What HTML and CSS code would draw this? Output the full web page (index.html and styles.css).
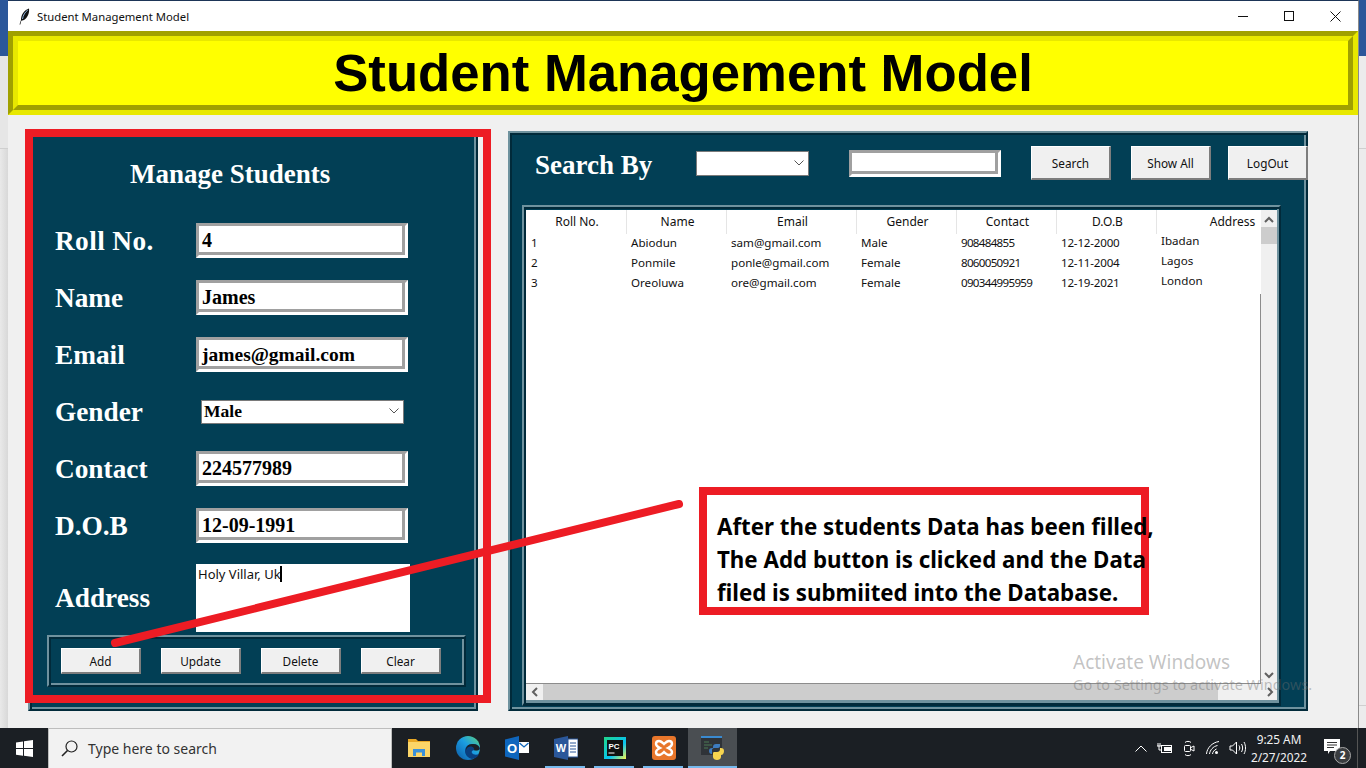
FILE: index.html
```html
<!DOCTYPE html>
<html lang="en">
<head>
<meta charset="utf-8">
<title>Student Management Model</title>
<link rel="stylesheet" href="styles.css">
</head>
<body>
<div class="screen">
  <div class="desk">
    <div class="side side-left"><div class="side-blue"></div><div class="side-band"></div><div class="side-rest"></div></div>
    <div class="window">
      <div class="titlebar">
        <svg class="feather" width="12" height="17" viewBox="0 0 12 17"><path d="M1.500 16.500 3 12C3 7 6 2 11 .5c.6 4-1 9-5 11.500l-2.700.8-1 3.700z" fill="#111"/><path d="M4.500 11C5 7.500 7 4 9.800 2" stroke="#8fb4dc" stroke-width="1" fill="none"/></svg>
        <span class="title-text">Student Management Model</span>
        <div class="win-controls">
          <span class="win-btn"><svg width="10" height="10" viewBox="0 0 10 10"><path d="M0 5.500h10" stroke="#111" fill="none"/></svg></span>
          <span class="win-btn"><svg width="10" height="10" viewBox="0 0 10 10"><rect x=".5" y=".5" width="9" height="9" stroke="#111" fill="none"/></svg></span>
          <span class="win-btn"><svg width="11" height="11" viewBox="0 0 11 11"><path d="M.5.500l10 10M10.500.500l-10 10" stroke="#111" fill="none"/></svg></span>
        </div>
      </div>
      <header class="banner"><h1 class="banner-inner">Student Management Model</h1></header>
      <div class="content">
        <section class="frame manage">
          <h2 class="manage-title">Manage Students</h2>
          <div class="row"><span class="label label-roll">Roll No.</span><div class="entry">4</div></div>
          <div class="row"><span class="label">Name</span><div class="entry">James</div></div>
          <div class="row"><span class="label">Email</span><div class="entry entry-email">james@gmail.com</div></div>
          <div class="row"><span class="label">Gender</span><div class="combo combo-gender"><span>Male</span><svg class="chev" width="10" height="6" viewBox="0 0 10 6"><path d="M.5.500 5 5 9.500.500" stroke="#555" fill="none"/></svg></div></div>
          <div class="row"><span class="label">Contact</span><div class="entry">224577989</div></div>
          <div class="row"><span class="label">D.O.B</span><div class="entry">12-09-1991</div></div>
          <div class="row row-address"><span class="label">Address</span><div class="textarea"><span>Holy Villar, Uk</span><i class="caret"></i></div></div>
          <div class="btn-frame">
            <button class="btn">Add</button>
            <button class="btn">Update</button>
            <button class="btn">Delete</button>
            <button class="btn">Clear</button>
          </div>
        </section>
        <section class="frame results">
          <div class="searchbar">
            <span class="label search-label">Search By</span>
            <div class="combo combo-search"><svg class="chev" width="10" height="6" viewBox="0 0 10 6"><path d="M.5.500 5 5 9.500.500" stroke="#555" fill="none"/></svg></div>
            <div class="entry entry-search"></div>
            <button class="btn btn-tall btn-search">Search</button>
            <button class="btn btn-tall btn-showall">Show All</button>
            <button class="btn btn-tall btn-logout">LogOut</button>
          </div>
          <div class="tree-frame">
            <div class="tree">
              <div class="tr th"><span>Roll No.</span><span>Name</span><span>Email</span><span>Gender</span><span>Contact</span><span>D.O.B</span><span>Address</span></div>
              <div class="tr"><span>1</span><span>Abiodun</span><span>sam@gmail.com</span><span>Male</span><span class="phone">908484855</span><span class="date">12-12-2000</span><span class="addr">Ibadan</span></div>
              <div class="tr"><span>2</span><span>Ponmile</span><span>ponle@gmail.com</span><span>Female</span><span class="phone">8060050921</span><span class="date">12-11-2004</span><span class="addr">Lagos</span></div>
              <div class="tr"><span>3</span><span>Oreoluwa</span><span>ore@gmail.com</span><span>Female</span><span class="phone">090344995959</span><span class="date">12-19-2021</span><span class="addr">London</span></div>
              <div class="tree-rest"></div>
            </div>
            <div class="vscroll">
              <svg class="sb-arrow" width="10" height="7" viewBox="0 0 10 7"><path d="M1 6 5 2l4 4" stroke="#606060" stroke-width="2" fill="none"/></svg>
              <div class="vthumb"></div>
              <svg class="sb-arrow sb-down" width="10" height="7" viewBox="0 0 10 7"><path d="M1 1l4 4 4-4" stroke="#606060" stroke-width="2" fill="none"/></svg>
            </div>
            <div class="hscroll">
              <svg class="sb-h" width="7" height="10" viewBox="0 0 7 10"><path d="M6 1 2 5l4 4" stroke="#606060" stroke-width="2" fill="none"/></svg>
              <div class="hthumb"></div>
              <svg class="sb-h" width="7" height="10" viewBox="0 0 7 10"><path d="M1 1l4 4-4 4" stroke="#606060" stroke-width="2" fill="none"/></svg>
            </div>
          </div>
        </section>
      </div>
    </div>
    <div class="side side-right"><div class="side-blue"></div><div class="side-band"></div><div class="side-rest2"></div></div>
  </div>

  <footer class="taskbar">
    <div class="start"><svg width="17" height="17" viewBox="0 0 17 17"><path d="M0 2.400 7 1.400v6.700H0zM8 1.300 17 0v8.100H8zM0 9.100h7v6.600L0 14.700zM8 9.100h9V17l-9-1.200z" fill="#fff"/></svg></div>
    <div class="search"><svg width="17" height="17" viewBox="0 0 17 17"><circle cx="10.500" cy="6.500" r="5.500" stroke="#222" stroke-width="1.200" fill="none"/><path d="M6.500 10.500 1 16" stroke="#222" stroke-width="1.600" fill="none"/></svg><span>Type here to search</span></div>
    <div class="apps">
      <div class="app"><svg width="22" height="20" viewBox="0 0 22 20"><path d="M0 1h8l2 2h12v15H0z" fill="#e9a825"/><path d="M0 4h22v15H0z" fill="#fbd568"/><path d="M5 18v-7h12v7h-3v-3.500H8V18z" fill="#3a90d8"/></svg></div>
      <div class="app"><svg width="24" height="24" viewBox="0 0 24 24"><defs><linearGradient id="edge" x1="0" y1="1" x2="1" y2="0"><stop offset="0" stop-color="#0c59a4"/><stop offset=".55" stop-color="#1b9de2"/><stop offset="1" stop-color="#5ed47b"/></linearGradient></defs><circle cx="12" cy="12" r="12" fill="url(#edge)"/><path d="M24 13c0-3-3-5-7-5-5 0-8 3-8 7 0 4 3 7 7 8 5-1 6-3 7-5-2 1-6 1-7-1s1-3 3-3 4 1 5-1z" fill="#0a3f7e"/><path d="M23.500 12.500c-.5 2-3 2.500-5.500 1.800 1-1.500-1-4.300-4-3.800-2.500.4-3.500 2-3.800 3.500C9.500 10.500 13 7.500 17 8c4 .3 6.500 2.500 6.500 4.500z" fill="#1c2025"/></svg></div>
      <div class="app"><svg width="24" height="24" viewBox="0 0 24 24"><path d="M0 3.500 14 0v24L0 20.500z" fill="#0f66bd"/><rect x="14" y="6" width="10" height="11" fill="#fff"/><path d="M14.500 7 19 11l4.500-4" stroke="#0f66bd" stroke-width="1.300" fill="none"/><text x="7" y="16.500" class="svg-o">O</text></svg></div>
      <div class="app"><svg width="24" height="24" viewBox="0 0 24 24"><path d="M0 3 14 0v24L0 21z" fill="#2b579a"/><rect x="14" y="3" width="10" height="18" fill="#fff" stroke="#2b579a"/><path d="M16 7h6M16 10h6M16 13h6M16 16h6" stroke="#2b579a"/><text x="7" y="16" class="svg-w">W</text></svg></div>
      <div class="app"><svg width="22" height="22" viewBox="0 0 22 22"><defs><linearGradient id="pc" x1="0" y1="0" x2="1" y2="1"><stop offset="0" stop-color="#21d789"/><stop offset=".6" stop-color="#07c3f2"/><stop offset="1" stop-color="#fcf84a"/></linearGradient></defs><rect width="22" height="22" fill="url(#pc)"/><rect x="3" y="3" width="16" height="16" fill="#111"/><text x="4.500" y="11.500" class="svg-pc">PC</text><path d="M4.500 16h6" stroke="#fff"/></svg></div>
      <div class="app"><svg width="24" height="24" viewBox="0 0 24 24"><rect width="24" height="24" rx="3" fill="#e8762b"/><path d="M7 5c2 0 3 1 5 3 2-2 3-3 5-3 2 0 3 1 3 3 0 2-2 3-4 4 2 1 4 2 4 4 0 2-1 3-3 3s-3-1-5-3c-2 2-3 3-5 3s-3-1-3-3c0-2 2-3 4-4-2-1-4-2-4-4 0-2 1-3 3-3z" fill="none" stroke="#fff" stroke-width="2.400"/></svg></div>
      <div class="app app-active"><svg width="23" height="24" viewBox="0 0 23 24"><rect y="1" width="21" height="18" fill="#2f3338"/><rect y="0" width="21" height="2" fill="#3a8ad0"/><path d="M3 6h5M3 9h8M3 12h4" stroke="#4d7a55"/><path d="M11 21v-7c0-1 1-2 2-2h4c1 0 2-1 2-2V8h-4c-2 0-3 1-3 3v1h-1c-2 0-3 1-3 3s1 3 3 3z" fill="#3d7cc0"/><path d="M23 15c0-2-1-3-3-3h-1v1c0 2-1 3-3 3h-3c-1 0-1 1-1 2v3c0 2 2 3 4 3s4-1 4-3v-2c2 0 3-2 3-4z" fill="#f6d44f"/></svg></div>
    </div>
    <div class="tray">
      <span class="tray-item"><svg width="12" height="7" viewBox="0 0 12 7"><path d="M.5 6.500 6 1l5.500 5.500" stroke="#fff" fill="none"/></svg></span>
      <span class="tray-item"><svg width="16" height="11" viewBox="0 0 16 11"><rect x="4.500" y="2.500" width="10" height="7" stroke="#fff" fill="none"/><rect x="7" y="4" width="7" height="4" fill="#fff"/><path d="M0 3h4M1 0v3M3 0v3M2 3v4h3" stroke="#fff" fill="none"/></svg></span>
      <span class="tray-item"><svg width="12" height="17" viewBox="0 0 12 17"><rect x="1.500" y="5.500" width="6" height="6" rx="1" stroke="#fff" fill="none"/><path d="M8 7.500 11 6v5l-3-1.500M2 2.500C3 1 7 1 8 2.500M2 14.500c1 1.500 5 1.500 6 0" stroke="#fff" fill="none"/></svg></span>
      <span class="tray-item"><svg width="14" height="14" viewBox="0 0 14 14"><path d="M.5 13C1 7 6 1.500 13 .500M3.500 13c.5-4 3.500-7.500 8-8.500M6.500 13c.3-2 1.500-4 4-5" stroke="#fff" fill="none"/><circle cx="10.500" cy="11.500" r="1.500" fill="#fff"/></svg></span>
      <span class="tray-item"><svg width="17" height="14" viewBox="0 0 17 14"><path d="M1 5h2.500L7.500 1v12l-4-4H1zM10 4.500c1 1.500 1 3.500 0 5M12.500 3c1.500 2.500 1.500 5.500 0 8M15 1c2 3.500 2 8.500 0 12" stroke="#fff" fill="none"/></svg></span>
    </div>
    <div class="clock"><span>9:25 AM</span><span>2/27/2022</span></div>
    <div class="notify">
      <svg width="17" height="16" viewBox="0 0 17 16"><path d="M0 0h16v12H6l-2 3v-3H0z" fill="#fff"/><path d="M3 3.500h10M3 6h10M3 8.500h7" stroke="#333"/></svg>
      <span class="badge">2</span>
    </div>
    <div class="show-desktop"></div>
  </footer>

  <div class="mark mark-left"></div>
  <svg class="pointer" width="1366" height="768" viewBox="0 0 1366 768"><line x1="115" y1="643" x2="679" y2="504" stroke="#ed1c24" stroke-width="8" stroke-linecap="round"/></svg>
  <div class="note"><p>After the students Data has been filled,</p><p>The Add button is clicked and the Data</p><p>filed is submiited into the Database.</p></div>
  <div class="watermark"><span class="wm-1">Activate Windows</span><span class="wm-2">Go to Settings to activate Windows.</span></div>
</div>
</body>
</html>
```

FILE: styles.css
```css
* { box-sizing: border-box; }
html, body { margin: 0; padding: 0; }
body {
  width: 1366px;
  height: 768px;
  overflow: hidden;
  font-family: "Noto Sans", "Open Sans", sans-serif;
  font-size: 12px;
  color: #111;
  background: #f0f0f0;
}
.screen {
  position: relative;
  width: 1366px;
  height: 768px;
  display: flex;
  flex-direction: column;
}
.desk { height: 728px; display: flex; }
.side { flex: 1 1 0; display: flex; flex-direction: column; background: #ececec; }
.side-left { flex: 0 0 8px; background: #e6e6e6; }
.side-right { flex: 0 0 7px; }
.side-blue { height: 56px; background: #2b579a; }
.side-band { height: 93px; border-bottom: 1px solid #cfcfcf; }
.side-rest { flex: 1; background: linear-gradient(90deg, #e9e9e9, #d8d8d8); }
.side-rest2 { height: 557px; border-bottom: 1px solid #cfcfcf; }

.window {
  flex: 0 0 1351px;
  display: flex;
  flex-direction: column;
  background: #f0f0f0;
  border-top: 1px solid #1d3557;
  border-right: 1px solid #8a8a8a;
}
.titlebar {
  height: 30px;
  flex: none;
  display: flex;
  align-items: center;
  padding-left: 10px;
  background: #fff;
}
.feather { flex: none; }
.title-text { margin-left: 7px; font-size: 11.300px; color: #111; }
.win-controls { margin-left: auto; display: flex; }
.win-btn { width: 46px; height: 30px; display: flex; align-items: center; justify-content: center; }

.banner {
  height: 84px;
  flex: none;
  border: 5px solid;
  border-color: #a0a000 #e8e800 #e8e800 #a0a000;
}
.banner-inner {
  height: 100%;
  margin: 0;
  border: 5px solid;
  border-color: #e8e800 #a0a000 #a0a000 #e8e800;
  background: #ff0;
  color: #000;
  font: 700 52.700px/64px "Liberation Sans", Arial, sans-serif;
  text-align: center;
}

.content { display: flex; align-items: flex-start; padding: 15px 0 0 20px; gap: 30px; }
.frame {
  flex: none;
  border: 2px solid;
  border-color: #6f929e #012a3a #012a3a #6f929e;
  background: #023f55;
  box-shadow: inset 2px 2px 0 #012a3a, inset -2px -2px 0 #6f929e;
}
.manage { width: 450px; height: 581px; padding-top: 2px; }
.results { width: 800px; height: 580px; margin-top: 1px; }

.label {
  color: #fff;
  font: 700 27.300px/32px "Liberation Serif", "Times New Roman", serif;
  white-space: nowrap;
}
.label-roll { letter-spacing: .4px; }
.manage-title {
  margin: 0 0 9px 100px;
  height: 80px;
  color: #fff;
  font: 700 27px/80px "Liberation Serif", "Times New Roman", serif;
}
.row { display: flex; align-items: center; height: 35px; margin: 0 0 22px 25px; }
.row .label { flex: 0 0 141px; }
.row-address { height: 68px; margin: -1px 0 3px 25px; }

.entry {
  width: 212px;
  height: 35px;
  border: 3px solid;
  border-color: #a0a0a0 #fff #fff #a0a0a0;
  box-shadow: inset -3px -3px 0 #a0a0a0;
  background: #fff;
  padding-left: 3px;
  color: #000;
  font: 700 20px/29px "Liberation Serif", "Times New Roman", serif;
}
.entry-email { font-size: 19.500px; }
.combo {
  display: flex;
  align-items: center;
  background: #fff;
  border: 1px solid #7a7a7a;
  color: #000;
  font: 700 17.500px/20px "Liberation Serif", "Times New Roman", serif;
  padding: 0 0 1px 2px;
}
.chev { margin-left: auto; margin-right: 4px; flex: none; }
.combo-gender { width: 203px; height: 24px; margin-left: 5px; }
.combo-search { width: 113px; height: 25px; flex: none; }

.textarea {
  display: flex;
  align-items: flex-start;
  width: 214px;
  height: 68px;
  padding: 2px 0 0 2px;
  background: #fff;
  color: #111;
  font-size: 13px;
  line-height: 16px;
}
.caret { width: 2px; height: 16px; background: #000; margin-left: -1px; }

.btn-frame {
  display: flex;
  align-items: center;
  gap: 20px;
  width: 419px;
  height: 52px;
  margin-left: 17px;
  padding-left: 12px;
  border: 2px solid;
  border-color: #6f929e #012a3a #012a3a #6f929e;
  box-shadow: inset 2px 2px 0 #012a3a, inset -2px -2px 0 #6f929e;
}
.btn {
  flex: none;
  width: 80px;
  height: 26px;
  padding: 0;
  border-style: solid;
  border-width: 1px 2px 2px 1px;
  border-color: #fff #7d7d7d #7d7d7d #fff;
  background: #f0f0f0;
  color: #111;
  font: 11.800px "Noto Sans", "Open Sans", sans-serif;
}
.btn-tall { height: 34px; }

.searchbar { display: flex; align-items: center; height: 34px; margin-top: 13px; padding-left: 25px; }
.search-label { flex: 0 0 161px; padding-top: 4px; font-size: 27px; }
.entry-search { width: 152px; height: 27px; margin-left: 40px; flex: none; }
.btn-search { margin-left: 30px; }
.btn-showall { margin-left: 20px; }
.btn-logout { margin-left: 17px; }

.tree-frame {
  display: grid;
  grid-template-columns: 735px 16px;
  grid-template-rows: 474px 16px;
  width: 759px;
  height: 501px;
  margin: 25px 0 0 12px;
  padding: 3px 2px 0;
  border: 2px solid;
  border-bottom-width: 3px;
  border-color: #6f929e #012a3a #012a3a #6f929e;
  box-shadow: inset 2px 2px 0 #012a3a, inset -2px -3px 0 #6f929e;
}
.tree {
  display: flex;
  flex-direction: column;
  overflow: hidden;
  background: #fff;
  border-bottom: 1px solid #8c8c8c;
}
.tr {
  display: grid;
  grid-template-columns: 100px 100px 130px 100px 100px 100px 150px;
  height: 20px;
  flex: none;
  color: #111;
  font-size: 11.600px;
  line-height: 18px;
  white-space: nowrap;
}
.tr span { padding-left: 5px; }
.tr .addr { line-height: 14px; }
.tr .phone { letter-spacing: -.7px; }
.tr .date { letter-spacing: -.2px; }
.th { height: 24px; line-height: 23px; font-size: 12px; }
.th span { padding: 0 0 0 2px; text-align: center; border-left: 1px solid #e5e5e5; }
.th span:first-child { border-left: 0; }
.tree-rest { flex: 1; border-right: 1px solid #8c8c8c; }

.vscroll { display: flex; flex-direction: column; align-items: center; background: #f0f0f0; padding-top: 6px; }
.vthumb { width: 16px; height: 17px; margin-top: 4px; background: #cdcdcd; }
.sb-arrow { flex: none; }
.sb-down { margin-top: auto; margin-bottom: 5px; }
.hscroll {
  grid-column: 1 / 3;
  display: flex;
  align-items: center;
  background: #f0f0f0;
  padding-left: 5px;
}
.hthumb { width: 675px; height: 16px; margin: 0 49px 0 5px; background: #cdcdcd; }

.taskbar { height: 40px; flex: none; display: flex; background: #1b1f24; }
.start { flex: 0 0 48px; display: flex; align-items: center; justify-content: center; }
.search {
  flex: 0 0 344px;
  display: flex;
  align-items: center;
  padding-left: 12px;
  gap: 10px;
  background: #f2f2f2;
  border: 1px solid #bdbdbd;
  border-bottom: 0;
  color: #333;
  font-size: 14px;
}
.apps { display: flex; padding-left: 2px; }
.app {
  flex: 0 0 49px;
  height: 40px;
  display: flex;
  align-items: center;
  justify-content: center;
  position: relative;
}
.app:nth-child(n+4)::after {
  content: "";
  position: absolute;
  left: 4px;
  right: 5px;
  bottom: 0;
  height: 2px;
  background: #76b9ed;
}
.app-active { background: #4a4e52; }
.app-active.app::after { left: 0; right: 0; }
.svg-o { fill: #fff; font: 700 13px "Liberation Sans", sans-serif; text-anchor: middle; }
.svg-w { fill: #fff; font: 700 11px "Liberation Sans", sans-serif; text-anchor: middle; }
.svg-pc { fill: #fff; font: 700 8px "Liberation Sans", sans-serif; }

.tray { margin-left: auto; display: flex; align-items: center; }
.tray-item { width: 24px; height: 40px; display: flex; align-items: center; justify-content: center; }
.clock {
  flex: 0 0 60px;
  display: flex;
  flex-direction: column;
  align-items: center;
  justify-content: center;
  color: #f2f2f2;
  font-size: 11.800px;
  line-height: 18.500px;
  white-space: nowrap;
}
.notify { flex: 0 0 48px; position: relative; display: flex; align-items: center; justify-content: center; }
.notify svg { margin: -2px 2px 0 0; }
.badge {
  position: absolute;
  left: 25px;
  top: 19px;
  width: 17px;
  height: 17px;
  border-radius: 50%;
  background: #3a3d40;
  border: 1px solid #aaa;
  color: #fff;
  font-size: 10px;
  font-weight: 700;
  line-height: 15px;
  text-align: center;
}
.show-desktop { flex: 0 0 9px; border-left: 1px solid #555; }

.mark-left {
  position: absolute;
  left: 25px;
  top: 129px;
  width: 466px;
  height: 574px;
  border: 8px solid #ed1c24;
}
.pointer { position: absolute; left: 0; top: 0; pointer-events: none; }
.note {
  position: absolute;
  left: 699px;
  top: 487px;
  width: 450px;
  height: 128px;
  padding: 15px 0 0 10px;
  border: 8px solid #ed1c24;
  background: #fff;
  color: #000;
  font-size: 22.300px;
  font-weight: 700;
  line-height: 33px;
  white-space: nowrap;
}
.note p { margin: 0; }
.watermark {
  position: absolute;
  left: 1073px;
  top: 650px;
  display: flex;
  flex-direction: column;
  color: rgba(110, 110, 110, .42);
  white-space: nowrap;
}
.wm-1 { font-size: 19px; line-height: 25px; }
.wm-2 { font-size: 14.450px; line-height: 20px; }
```
